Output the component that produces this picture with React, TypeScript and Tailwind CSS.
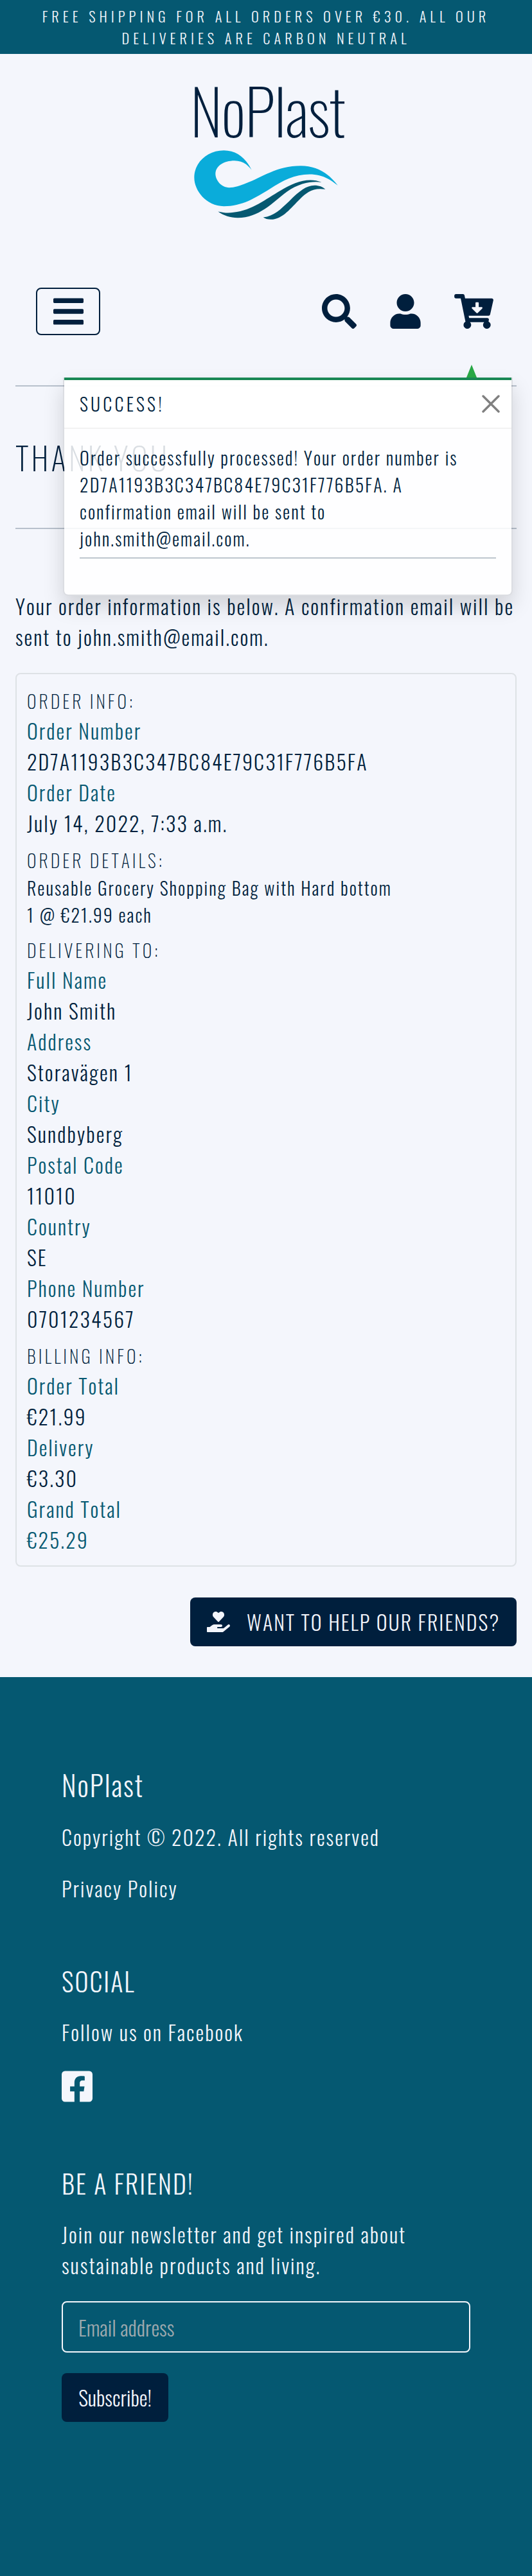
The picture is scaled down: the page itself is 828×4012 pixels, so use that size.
import type { ReactNode } from 'react';
import {
  FaBars,
  FaCartArrowDown,
  FaFacebookSquare,
  FaHandHoldingHeart,
  FaSearch,
  FaUser,
} from 'react-icons/fa';

function Logo() {
  return (
    <div className="flex flex-col items-center pt-[38px]">
      <div className="ml-[5px] h-[96px] text-[97px] leading-[96px] font-extralight tracking-[-1px] [font-kerning:normal]">
        NoPlast
      </div>
      <svg className="mt-3 h-[117px] w-[230px]" viewBox="57 360 690 350">
        <path
          fill="#0aacda"
          d="M335 464C308 408 265 372 205 372C128 372 67 428 67 500C67 560 123 633 205 633C290 633 350 595 420 552C480 513 535 484 605 484C660 484 695 503 737 536C695 480 640 444 565 444C450 444 380 500 310 525C280 537 255 546 230 546C192 546 166 510 166 482C166 445 205 420 255 420C290 420 315 437 335 464Z"
        />
        <path
          fill="#055871"
          d="M178 658C205 664 225 666 250 662C340 652 400 600 470 560C530 522 600 495 662 521C620 515 560 522 500 565C430 618 370 687 270 687C235 687 205 677 178 658Z"
        />
        <path
          fill="#055871"
          d="M389 685C440 680 470 647 510 610C560 560 590 537 628 536C650 536 667 543 679 554C620 545 590 570 560 600C520 638 480 695 425 695C410 695 397 691 389 685Z"
        />
      </svg>
    </div>
  );
}

function Toast() {
  return (
    <div className="absolute top-[588px] left-[98px] h-[340px] w-[700px] rounded-lg rounded-t-none border-x-2 border-b-2 border-black/10 bg-white/85 bg-clip-padding shadow-[0_16px_32px_rgba(0,0,0,0.15)]">
      <div className="absolute -top-5 right-[54px] h-5 w-4 bg-[#28a745] [clip-path:polygon(50%_0,100%_100%,0_100%)]" />
      <div className="h-1 bg-[#198754]" />
      <div className="flex h-[76px] items-center justify-between border-b-2 border-black/5 bg-white/85 pr-[18px] pl-6">
        <span className="text-[28px] leading-[42px] tracking-[4.2px]">SUCCESS!</span>
        <svg className="size-7" viewBox="0 0 28 28" stroke="#808080" strokeWidth="3.4" strokeLinecap="round">
          <path d="M2 2L26 26M26 2L2 26" />
        </svg>
      </div>
      <div className="px-6 pt-6">
        <p className="text-[28px] leading-[42px] tracking-[2px]">
          Order successfully processed! Your order number is
          <br />
          <span className="tracking-[2.09px]">2D7A1193B3C347BC84E79C31F776B5FA. A</span>
          <br />
          confirmation email will be sent to
          <br />
          john.smith@email.com.
        </p>
        <div className="mt-2 h-0.5 bg-[#001f3d]/25" />
      </div>
    </div>
  );
}

function Section({ title, children }: { title: string; children: ReactNode }) {
  return (
    <section>
      <h3 className="text-[28px] leading-[44px] font-extralight tracking-[4px]">{title}</h3>
      {children}
    </section>
  );
}

function Fields({ rows }: { rows: [string, string][] }) {
  return (
    <dl>
      {rows.map(([label, value]) => (
        <div key={label}>
          <dt className="text-[#055871]">{label}</dt>
          <dd className={label === 'Grand Total' ? 'text-[#055871]' : 'tracking-[2.09px]'}>{value}</dd>
        </div>
      ))}
    </dl>
  );
}

function Footer() {
  return (
    <footer className="mt-12 h-[1400px] bg-[#055871] px-24 pt-[142px] text-[#f4f6fc]">
      <h4 className="text-[43.3px] leading-[52px]">NoPlast</h4>
      <p className="mt-[31px]">Copyright © 2022. All rights reserved</p>
      <p className="mt-8">Privacy Policy</p>
      <h5 className="mt-24 text-[40px] leading-[48px]">SOCIAL</h5>
      <p className="mt-8">Follow us on Facebook</p>
      <FaFacebookSquare className="mt-[33px] h-[55px] w-12" />
      <h5 className="mt-[99px] text-[40px] leading-[48px]">BE A FRIEND!</h5>
      <p className="mt-8">
        Join our newsletter and get inspired about
        <br />
        sustainable products and living.
      </p>
      <input
        className="mt-8 block h-20 w-[636px] rounded-lg border-2 border-[#f4f6fc] bg-transparent px-6 tracking-normal placeholder:text-[#9ea9ae]"
        placeholder="Email address"
      />
      <button className="mt-8 block h-[76px] w-[166px] rounded-lg bg-[#001f3d] tracking-normal">Subscribe!</button>
    </footer>
  );
}

export default function App() {
  return (
    <div className="relative h-[4012px] w-[828px] overflow-hidden bg-[#f4f6fc] font-[Oswald,'Open_Sans',sans-serif] text-[32px] leading-[48px] font-light tracking-[2px] text-[#001f3d] [font-kerning:none]">
      <div className="h-[84px] bg-[#055871] pt-2 text-center text-[22.4px] leading-[33.6px] tracking-[6px] text-[#f4f6fc]">
        FREE SHIPPING FOR ALL ORDERS OVER €30. ALL OUR
        <br />
        DELIVERIES ARE CARBON NEUTRAL
      </div>
      <div className="h-[364px]">
        <Logo />
      </div>
      <nav className="flex h-[74px] items-center justify-between pr-[60px] pl-14">
        <button className="flex h-[74px] w-[100px] items-center justify-center rounded-lg border-2 border-[#001f3d]">
          <FaBars className="h-[54px] w-[47px]" />
        </button>
        <div className="flex items-center gap-[52px]">
          <FaSearch className="size-[54px]" />
          <FaUser className="h-[54px] w-12" />
          <FaCartArrowDown className="h-[54px] w-[61px]" />
        </div>
      </nav>
      <main className="px-6 pt-[78px]">
        <div className="h-0.5 bg-[#001f3d]/25" />
        <h2 className="my-20 text-[49.8px] leading-[60px] font-extralight tracking-[4px]">THANK YOU</h2>
        <div className="h-0.5 bg-[#001f3d]/25" />
        <p className="mt-24 whitespace-nowrap">
          Your order information is below. A confirmation email will be
          <br />
          sent to john.smith@email.com.
        </p>
        <div className="mt-8 flex h-[1392px] flex-col gap-3 rounded-lg border-2 border-[#dee2e6] px-4 pt-5">
          <Section title="ORDER INFO:">
            <Fields
              rows={[
                ['Order Number', '2D7A1193B3C347BC84E79C31F776B5FA'],
                ['Order Date', 'July 14, 2022, 7:33 a.m.'],
              ]}
            />
          </Section>
          <Section title="ORDER DETAILS:">
            <p className="text-[28px] leading-[42px]">Reusable Grocery Shopping Bag with Hard bottom</p>
            <p className="text-[28px] leading-[42px]">1 @ €21.99 each</p>
          </Section>
          <Section title="DELIVERING TO:">
            <Fields
              rows={[
                ['Full Name', 'John Smith'],
                ['Address', 'Storavägen 1'],
                ['City', 'Sundbyberg'],
                ['Postal Code', '11010'],
                ['Country', 'SE'],
                ['Phone Number', '0701234567'],
              ]}
            />
          </Section>
          <Section title="BILLING INFO:">
            <Fields
              rows={[
                ['Order Total', '€21.99'],
                ['Delivery', '€3.30'],
                ['Grand Total', '€25.29'],
              ]}
            />
          </Section>
        </div>
        <div className="mt-12 flex justify-end">
          <button className="flex h-[76px] w-[508px] items-center gap-[26px] rounded-lg bg-[#001f3d] pl-[26px] tracking-[2px] whitespace-nowrap text-[#f4f6fc]">
            <FaHandHoldingHeart className="h-8 w-9 shrink-0" />
            WANT TO HELP OUR FRIENDS?
          </button>
        </div>
      </main>
      <Footer />
      <Toast />
    </div>
  );
}
